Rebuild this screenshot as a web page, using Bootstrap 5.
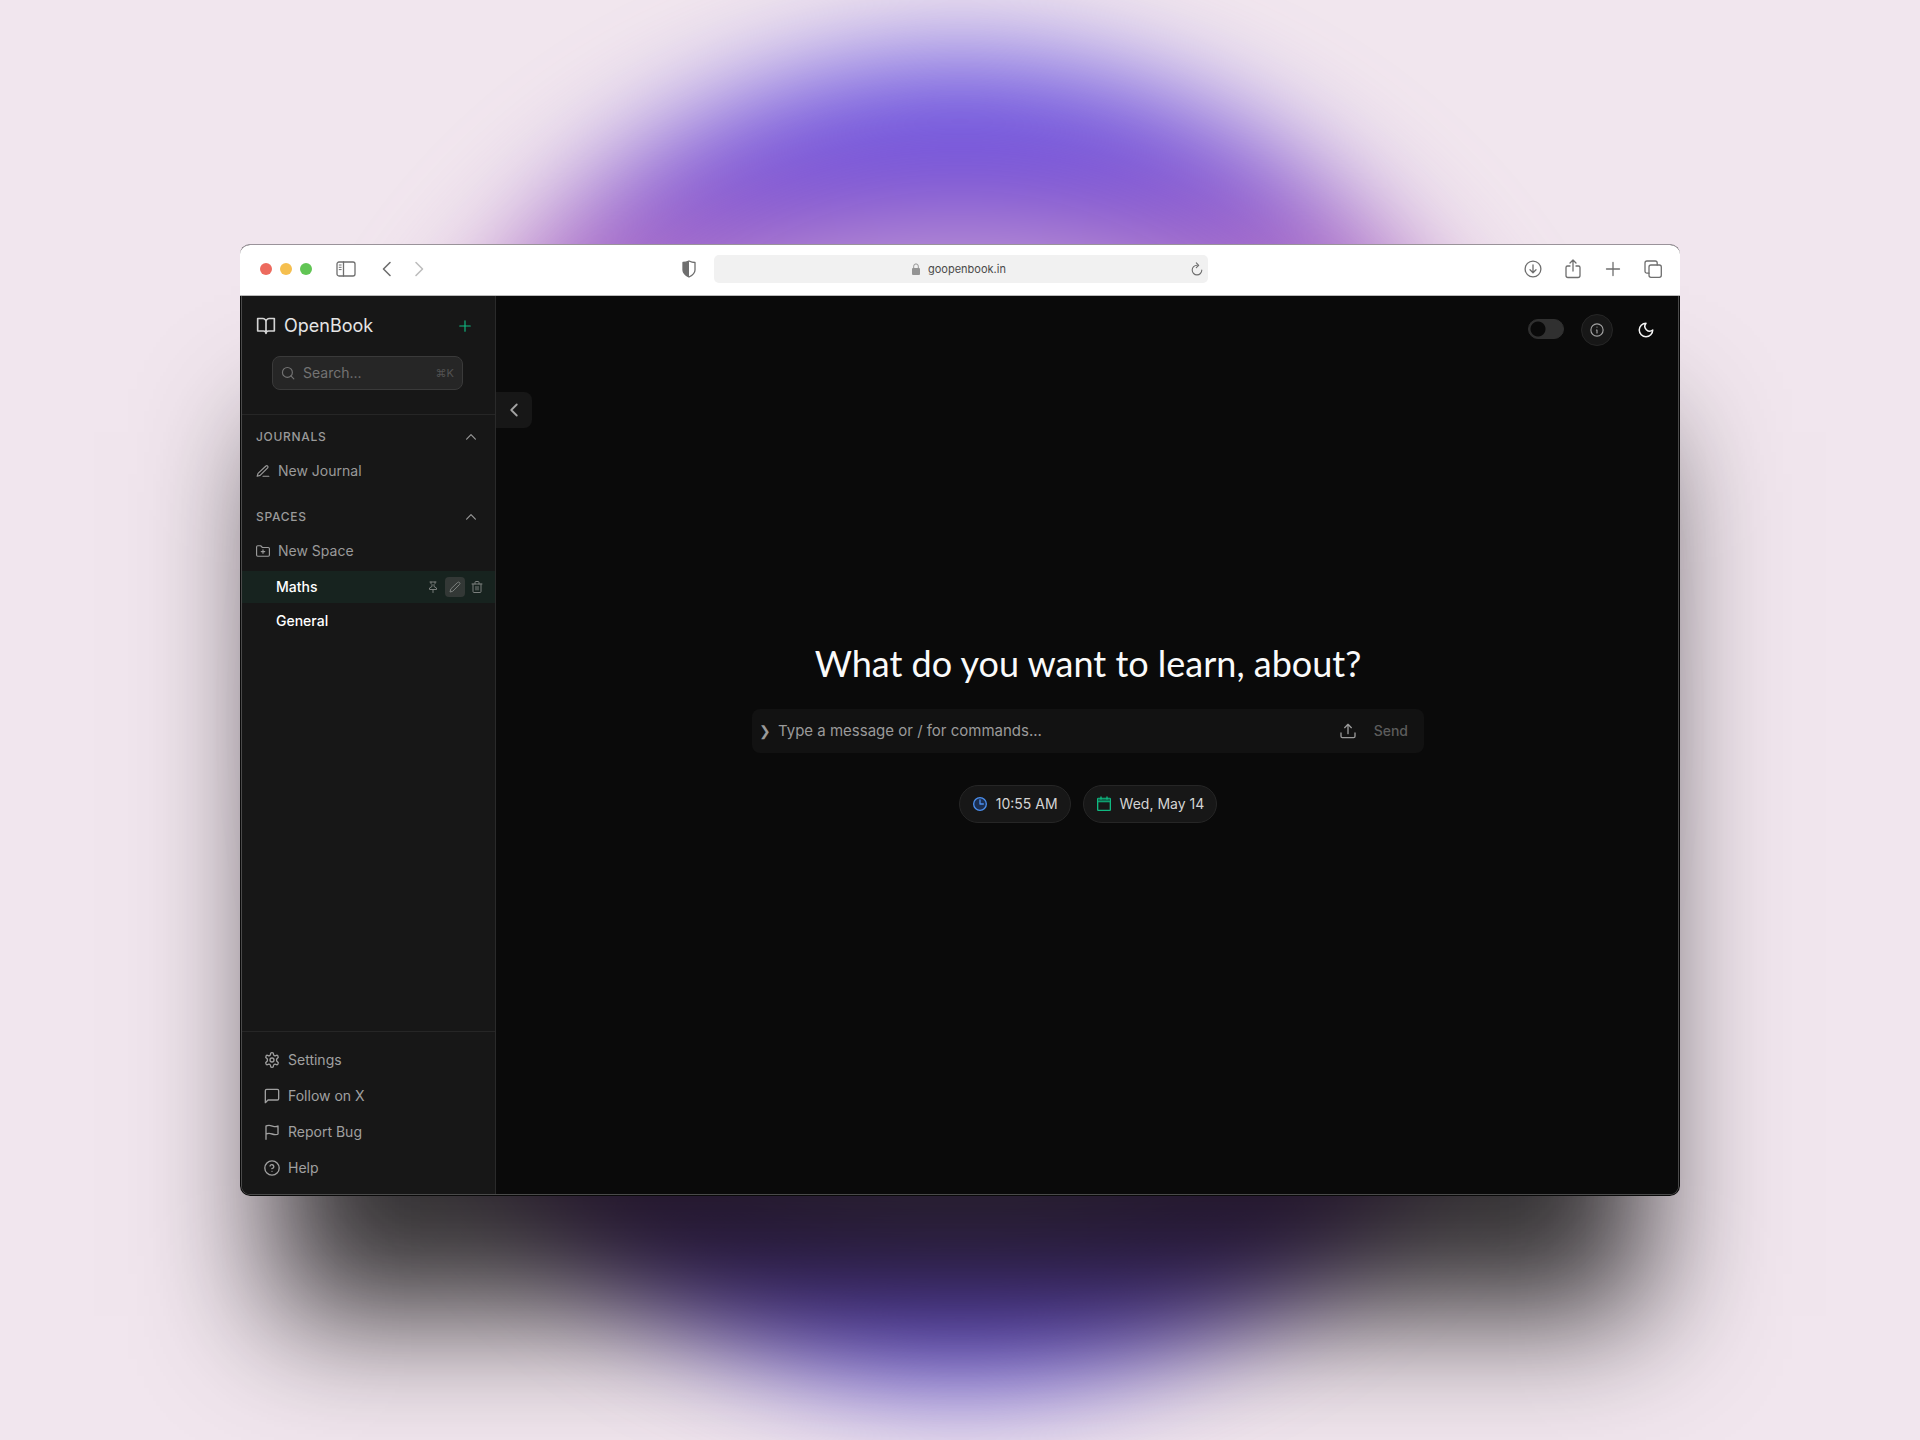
<!DOCTYPE html>
<html lang="en">
<head>
<meta charset="utf-8">
<meta name="viewport" content="width=device-width, initial-scale=1">
<title>OpenBook</title>
<link href="https://cdn.jsdelivr.net/npm/bootstrap@5.3.0/dist/css/bootstrap.min.css" rel="stylesheet">
<style>
  body { font-family: Inter, "Liberation Sans", sans-serif; font-size: 14px; line-height: 20px; background: #f1e6ee; }
  svg { display: block; fill: none; stroke: currentColor; stroke-width: 2; stroke-linecap: round; stroke-linejoin: round; flex: none; }
  a { text-decoration: none; }

  /* Glowing backdrop */
  .stage { position: relative; overflow: hidden; }
  .glow { position: absolute; left: 50%; top: 50%; width: 1230px; height: 1326px; transform: translate(-50%, -50%); border-radius: 50%; filter: blur(54px);
    background: radial-gradient(circle, #dcc8e4 0, rgba(218,198,228,.6) 440px, rgba(200,170,220,0) 535px),
      linear-gradient(#5c50e6 0, #6c4cda 90px, #8454cc 145px, #ac6ac4 220px, #b870c0 280px, #b870c0 1046px, #ac6ac4 1106px, #8454cc 1181px, #6c4cda 1236px, #5c50e6 100%); }

  /* Browser window */
  .browser-wrap { position: relative; width: 75%; border-radius: 10px; box-shadow: 0 154px 120px -34px rgba(0,0,0,.78); }
  .browser { aspect-ratio: 1440 / 952; border-radius: 10px; overflow: hidden; border-top: 1px solid #9a939a; background: #0a0a0a; }
  .chrome { height: 51px; background: #fff; color: #6e6e6e; padding: 0 18px 2px 20px; border-bottom: 1px solid #bbb; }
  .chrome svg { stroke-width: 1.3; }
  .chrome .side { flex: 1 1 0; }
  .light { width: 12px; height: 12px; border-radius: 50%; }
  .red { background: #ed6a5e; } .amber { background: #f5bf4f; } .green { background: #61c554; }
  .lights { gap: 8px; }
  .shield { margin-right: 18px; }
  .actions { gap: 22px; }
  .address { width: 494px; height: 28px; border-radius: 5px; background: #f1f1f1; }
  .address input { width: 80px; font-size: 11px; line-height: 16px; color: #4a4a4a; background: none; border: 0; padding: 0; }
  .bare { background: none; border: 0; padding: 0; color: inherit; }
  .forward { color: #bdbdbd; margin-left: 18px; }

  /* Application */
  .app { flex: 1; min-height: 0; margin: 0 1px 1px; border: 1px solid #4a4a4a; border-top: 0; border-radius: 0 0 9px 9px; overflow: hidden; }
  .sidebar { width: 254px; background: #171717; color: #a0a0a0; border-right: 1px solid #2a2a2a; }
  .brand-row { padding: 11px 23px 0 14px; height: 48px; }
  .brand-name { font-size: 18px; line-height: 24px; color: #e5e5e5; margin: 0; font-weight: 400; }
  .plus { color: #10b981; }
  .find { margin: 12px 32px 24px 30px; height: 34px; border: 1px solid #3a3a3a; border-radius: 8px; background: #262626; padding: 0 8px; color: #737373; }
  .find input { background: none; border: 0; width: 100%; min-width: 0; color: #737373; padding: 0; }
  .find input::placeholder, .prompt input::placeholder { color: inherit; opacity: 1; }
  .keys { font-size: 11px; color: #525252; }
  .rule-line { border-top: 1px solid #262626; }
  .groups { padding-top: 2px; }
  .section-head { padding: 0 17px 0 14px; height: 39px; letter-spacing: .05em; color: #9a9a9a; }
  .section-head h2 { font-size: 12px; line-height: 16px; margin: 0; font-weight: 500; }
  .new-link { height: 30px; padding: 0 14px; gap: 8px; color: #9a9a9a; margin-bottom: 11px; }
  .new-link.last { margin-bottom: 5px; }
  .space-row { height: 32px; padding: 0 8px 0 34px; margin-bottom: 2px; gap: 2px; }
  .space-row a { color: #fff; font-weight: 500; }
  .space-row.current { background: #17231f; }
  .tool { width: 20px; height: 20px; border-radius: 4px; color: #7b7f7d; }
  .tool.hot { background: #333836; }
  .foot { padding: 10px 22px 8px; }
  .foot a { height: 36px; gap: 8px; color: #a0a0a0; }

  .mainpane { position: relative; flex: 1; background: #0a0a0a; }
  .corner { position: absolute; right: 16px; top: 18px; gap: 17px; }
  .form-check-input.flip { width: 36px; height: 20px; margin: 0; background-color: #303030; border: 1px solid #303030; background-image: radial-gradient(circle at 9px 9px, #0a0a0a 7px, transparent 8px); background-position: left; background-size: 100%; }
  .flipwrap { padding: 0; min-height: 0; }
  .round { width: 32px; height: 32px; border-radius: 50%; color: #a3a3a3; }
  .info { background: #171717; border: 1px solid #262626; }
  .moon { color: #f5f5f5; }
  .collapse-tab { position: absolute; left: 0; top: 96px; width: 36px; height: 36px; border-radius: 0 8px 8px 0; background: #171717; color: #a3a3a3; }
  .hero { padding: 0 0 27px 2px; }
  .hero h1 { font-family: Lato, sans-serif; font-size: 36px; line-height: 44px; font-weight: 400; color: #fafafa; margin: 0 0 24px; }
  .prompt { width: 672px; max-width: 90%; height: 44px; border-radius: 8px; background: #121212; color: #9a9a9a; padding: 0 16px 0 7px; gap: 7px; font-size: 15px; }
  .prompt input { background: none; border: 0; flex: 1; min-width: 0; color: #9a9a9a; padding: 0; }
  .caret-mark { font-size: 14px; }
  .upload { margin-right: 11px; }
  .send { color: #5c5c5c; font-size: 14px; font-weight: 500; }
  .pills { margin-top: 32px; gap: 12px; }
  .pill { height: 38px; border-radius: 19px; border: 1px solid #262626; background: #171717; color: #d4d4d4; padding: 0 12px; gap: 8px; }
</style>
</head>
<body>
<div class="stage min-vh-100 d-flex align-items-center justify-content-center">
  <div class="glow"></div>
  <div class="browser-wrap">
  <div class="browser d-flex flex-column">
    <header class="chrome d-flex align-items-center flex-shrink-0">
      <div class="side d-flex align-items-center">
        <div class="lights d-flex me-4"><span class="light red"></span><span class="light amber"></span><span class="light green"></span></div>
        <button class="bare" aria-label="Toggle sidebar"><svg width="20" height="16" viewBox="0 0 20 16"><rect x="1" y="1" width="18" height="14" rx="2"/><path d="M7.500 1v14"/><path d="M3.200 4h2M3.200 6.300h2M3.200 8.600h2" stroke-width="1"/></svg></button>
        <button class="bare ms-4" aria-label="Back"><svg width="14" height="16" viewBox="0 0 14 16"><path d="M10 1.500 3.500 8l6.500 6.500" stroke-width="1.600"/></svg></button>
        <button class="bare forward" aria-label="Forward"><svg width="14" height="16" viewBox="0 0 14 16"><path d="M4 1.500 10.500 8 4 14.500" stroke-width="1.600"/></svg></button>
        <button class="bare shield ms-auto" aria-label="Privacy"><svg width="14" height="18" viewBox="0 0 14 18"><path d="M7 1c2 1 4 1.500 6 1.500V10c0 3-3 5.500-6 7-3-1.500-6-4-6-7V2.500C3 2.500 5 2 7 1Z"/><path d="M7 1v16c-3-1.500-6-4-6-7V2.500C3 2.500 5 2 7 1Z" fill="currentColor" stroke="none"/></svg></button>
      </div>
      <div class="address d-flex align-items-center">
        <div class="flex-fill"></div>
        <svg class="ms-3" width="8" height="12" viewBox="0 0 8 12"><rect y="5" width="8" height="7" rx="1" fill="#949494" stroke="none"/><path d="M1.700 5V3.200a2.300 2.300 0 0 1 4.600 0V5" stroke="#949494" stroke-width="1"/></svg>
        <input class="ms-2" aria-label="Address" value="goopenbook.in">
        <div class="flex-fill"></div>
        <button class="bare me-1" aria-label="Reload"><svg width="14" height="14" viewBox="0 0 14 14"><path d="M7 3.300a4.800 4.800 0 1 0 4.800 4.800M6.300.900 8.700 3.300 6.300 5.700" stroke-width="1.100"/></svg></button>
      </div>
      <div class="side actions d-flex align-items-center justify-content-end">
        <button class="bare" aria-label="Downloads"><svg width="18" height="18" viewBox="0 0 18 18"><circle cx="9" cy="9" r="7.900"/><path d="M9 5v7.500M6 9.800l3 3 3-3"/></svg></button>
        <button class="bare" aria-label="Share"><svg width="18" height="20" viewBox="0 0 18 20"><path d="M6 7H3.500A1.500 1.500 0 0 0 2 8.500v8A2 2 0 0 0 4 18.500h10a2 2 0 0 0 2-2v-8A1.500 1.500 0 0 0 14.500 7H12M9 12V1.200M6 4l3-3 3 3"/></svg></button>
        <button class="bare" aria-label="New tab"><svg width="18" height="18" viewBox="0 0 18 18"><path d="M9 2.500v13M2.500 9h13"/></svg></button>
        <button class="bare" aria-label="Tabs"><svg width="18" height="18" viewBox="0 0 18 18"><rect x="5" y="5" width="12.300" height="12.300" rx="2"/><path d="M5 13.200H3a2 2 0 0 1-2-2V3a2 2 0 0 1 2-2h8.200a2 2 0 0 1 2 2v2"/></svg></button>
      </div>
    </header>

    <div class="app d-flex">
      <aside class="sidebar d-flex flex-column flex-shrink-0">
        <div class="brand-row d-flex align-items-center">
          <svg width="20" height="20" viewBox="0 0 24 24" color="#d4d4d4"><path d="M2 3h6a4 4 0 0 1 4 4v14a3 3 0 0 0-3-3H2zM22 3h-6a4 4 0 0 0-4 4v14a3 3 0 0 1 3-3h7z"/></svg>
          <h1 class="brand-name ms-2 flex-fill">OpenBook</h1>
          <button class="bare plus" aria-label="New"><svg width="14" height="14" viewBox="0 0 24 24"><path d="M12 3v18M3 12h18"/></svg></button>
        </div>
        <label class="find d-flex align-items-center">
          <svg width="14" height="14" viewBox="0 0 24 24"><circle cx="11" cy="11" r="8.500"/><path d="m22 22-5-5"/></svg>
          <input class="ms-2" type="text" placeholder="Search..." aria-label="Search">
          <span class="keys">⌘K</span>
        </label>
        <div class="groups rule-line">
          <div class="section-head d-flex align-items-center justify-content-between"><h2>JOURNALS</h2>
            <button class="bare" aria-label="Collapse journals"><svg width="14" height="14" viewBox="0 0 24 24"><path d="m4.500 15.500 7.500-7.500 7.500 7.500"/></svg></button></div>
          <a class="new-link d-flex align-items-center" href="#"><svg width="14" height="14" viewBox="0 0 24 24"><path d="M12 21h10M17 3.500a2.100 2.100 0 0 1 3 3L7 19.500l-5 1.500 1.500-5Z"/></svg>New Journal</a>
          <div class="section-head d-flex align-items-center justify-content-between"><h2>SPACES</h2>
            <button class="bare" aria-label="Collapse spaces"><svg width="14" height="14" viewBox="0 0 24 24"><path d="m4.500 15.500 7.500-7.500 7.500 7.500"/></svg></button></div>
          <a class="new-link last d-flex align-items-center" href="#"><svg width="14" height="14" viewBox="0 0 24 24"><path d="M23 19a2 2 0 0 1-2 2H3a2 2 0 0 1-2-2V5a2 2 0 0 1 2-2h5l3 3h10a2 2 0 0 1 2 2zM12 10v6M9 13h6"/></svg>New Space</a>
          <div class="space-row current d-flex align-items-center">
            <a class="flex-fill" href="#">Maths</a>
            <button class="bare tool d-flex align-items-center justify-content-center" aria-label="Pin"><svg width="12" height="12" viewBox="0 0 24 24"><path d="M12 17v6M6 2h12M8 2v3l2 2v4l-5 3v3h14v-3l-5-3V7l2-2V2"/></svg></button>
            <button class="bare tool hot d-flex align-items-center justify-content-center" aria-label="Rename"><svg width="12" height="12" viewBox="0 0 24 24"><path d="M17 3a2.800 2.800 0 1 1 4 4L7.500 20.500 2 22l1.500-5.500Z"/></svg></button>
            <button class="bare tool d-flex align-items-center justify-content-center" aria-label="Delete"><svg width="12" height="12" viewBox="0 0 24 24"><path d="M2 6h20M20 6v15a2 2 0 0 1-2 2H6a2 2 0 0 1-2-2V6M8 6V3a2 2 0 0 1 2-2h4a2 2 0 0 1 2 2v3M10 11v7M14 11v7"/></svg></button>
          </div>
          <div class="space-row d-flex align-items-center"><a href="#">General</a></div>
        </div>
        <nav class="foot rule-line mt-auto">
          <a class="d-flex align-items-center" href="#"><svg width="16" height="16" viewBox="0 0 24 24"><circle cx="12" cy="12" r="3"/><path d="M12.200 1h-.4a2 2 0 0 0-2 2v.5a2 2 0 0 1-1 1.700l-.4.300a2 2 0 0 1-2 0l-.5-.3a2 2 0 0 0-2.700.7l-.3.600a2 2 0 0 0 .7 2.700l.5.300a2 2 0 0 1 1 1.700v1.600a2 2 0 0 1-1 1.700l-.5.300a2 2 0 0 0-.7 2.700l.3.600a2 2 0 0 0 2.700.7l.5-.3a2 2 0 0 1 2 0l.4.300a2 2 0 0 1 1 1.700v.5a2 2 0 0 0 2 2h.4a2 2 0 0 0 2-2v-.5a2 2 0 0 1 1-1.700l.4-.3a2 2 0 0 1 2 0l.5.300a2 2 0 0 0 2.700-.7l.3-.6a2 2 0 0 0-.7-2.700l-.5-.3a2 2 0 0 1-1-1.700v-1.600a2 2 0 0 1 1-1.700l.5-.3a2 2 0 0 0 .7-2.700l-.3-.6a2 2 0 0 0-2.700-.7l-.5.300a2 2 0 0 1-2 0l-.4-.3a2 2 0 0 1-1-1.700V3a2 2 0 0 0-2-2z"/></svg>Settings</a>
          <a class="d-flex align-items-center" href="#"><svg width="16" height="16" viewBox="0 0 24 24"><path d="M22 16a2 2 0 0 1-2 2H6l-4 4V4a2 2 0 0 1 2-2h16a2 2 0 0 1 2 2z"/></svg>Follow on X</a>
          <a class="d-flex align-items-center" href="#"><svg width="16" height="16" viewBox="0 0 24 24"><path d="M3 15s1-1 4.500-1 6 2 9.500 2 4-1 4-1V3s-1 1-4 1-6-2-9.500-2S3 3 3 3zM3 23v-8"/></svg>Report Bug</a>
          <a class="d-flex align-items-center" href="#"><svg width="16" height="16" viewBox="0 0 24 24"><circle cx="12" cy="12" r="10.800"/><path d="M9 9a3 3 0 0 1 5.800 1c0 2-2.900 3-2.900 3M12 17h.01"/></svg>Help</a>
        </nav>
      </aside>

      <main class="mainpane d-flex flex-column">
        <button class="bare collapse-tab d-flex align-items-center justify-content-center" aria-label="Hide sidebar"><svg width="22" height="22" viewBox="0 0 24 24"><path d="m15 18-6-6 6-6"/></svg></button>
        <div class="corner d-flex align-items-center">
          <div class="form-check form-switch flipwrap d-flex"><input class="form-check-input flip" type="checkbox" role="switch" aria-label="Mode"></div>
          <button class="bare round info d-flex align-items-center justify-content-center" aria-label="Info"><svg width="14" height="14" viewBox="0 0 24 24"><circle cx="12" cy="12" r="10.500"/><path d="M12 17v-5h-1M12 7h.01"/></svg></button>
          <button class="bare round moon d-flex align-items-center justify-content-center" aria-label="Dark mode"><svg width="18" height="18" viewBox="0 0 24 24"><path d="M12 3a6.400 6.400 0 0 0 9 9 9 9 0 1 1-9-9Z"/></svg></button>
        </div>
        <div class="hero flex-fill d-flex flex-column align-items-center justify-content-center">
          <h1>What do you want to learn, about?</h1>
          <div class="prompt d-flex align-items-center">
            <span class="caret-mark">❯</span>
            <input type="text" placeholder="Type a message or / for commands..." aria-label="Message">
            <button class="bare upload" aria-label="Upload"><svg width="16" height="16" viewBox="0 0 24 24"><path d="M1.500 15v5a2 2 0 0 0 2 2h17a2 2 0 0 0 2-2v-5M12 16V2M7 7l5-5 5 5"/></svg></button>
            <button class="bare send">Send</button>
          </div>
          <div class="pills d-flex">
            <span class="pill d-flex align-items-center"><svg width="16" height="16" viewBox="0 0 24 24" color="#4b8fee"><circle cx="12" cy="12" r="9.500" fill="#1c2f50"/><path d="M12 6v6h5"/></svg>10:55 AM</span>
            <span class="pill d-flex align-items-center"><svg width="16" height="16" viewBox="0 0 24 24" color="#10b981"><rect x="2.500" y="3.500" width="19" height="18" rx="1"/><path d="M3 8.500h18"/><path d="M3 4h18v4H3z" fill="#0d6b4e" stroke="none"/><path d="M7.500 1.500v3M16.500 1.500v3"/></svg>Wed, May 14</span>
          </div>
        </div>
      </main>
    </div>
  </div>
  </div>
</div>
<script src="https://cdn.jsdelivr.net/npm/bootstrap@5.3.0/dist/js/bootstrap.bundle.min.js"></script>
</body>
</html>
